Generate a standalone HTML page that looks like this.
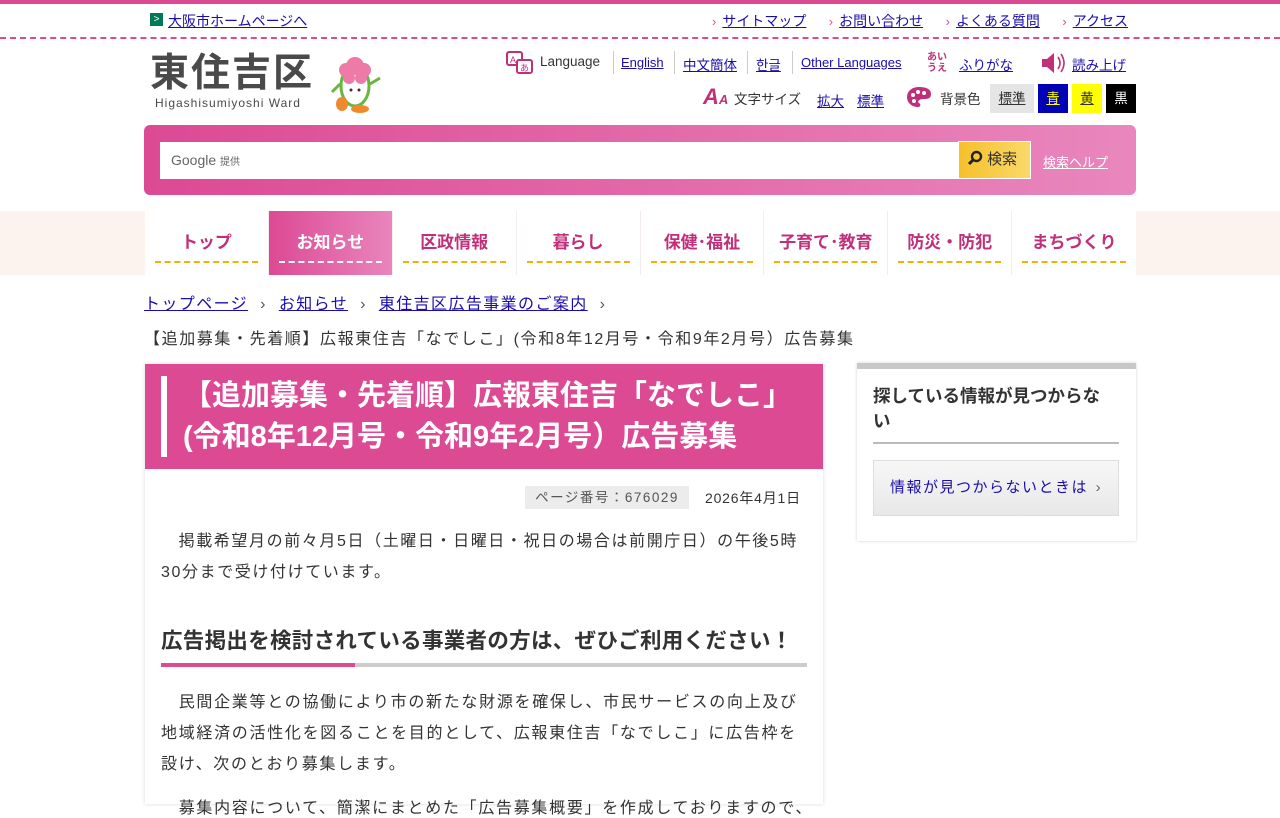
<!DOCTYPE html>
<html lang="ja"><head><meta charset="utf-8">
<style>
*{box-sizing:border-box;margin:0;padding:0}
body{width:1280px;height:800px;overflow:hidden;background:#fff;font-family:"Liberation Sans","Noto Sans CJK JP",sans-serif;color:#333;position:relative}
a{color:#1a0dab;text-decoration:underline}
.abs{position:absolute}
.topbar{position:absolute;left:0;top:0;width:1280px;height:4px;background:#dc4a94}
.dash{position:absolute;left:0;top:37px;width:1280px;border-top:2px dashed #dc4a94}
.sm{font-size:14px}
.tl a{font-size:14px;color:#1a0dab}
.chev{color:#dc4a94;font-size:13px;margin-right:6px}
.nav{position:absolute;left:0;top:211px;width:1280px;height:64px;background:#fdf3ee}
.navin{position:absolute;left:145px;top:0;width:991px;height:64px;background:#fff;display:flex}
.ni{width:124px;height:64px;border-right:1px solid #f4ecec;position:relative;text-align:center;color:#c0307a;font-weight:bold;font-size:17px;padding-top:17px}
.ni:after{content:"";position:absolute;left:10px;right:10px;top:50px;border-top:2px dashed #efb300}
.ni.on{background:linear-gradient(90deg,#dc4a94,#e985bd);color:#fff}
.ni.on:after{border-top-color:#fff}
</style></head><body>
<div class="topbar"></div>
<div class="abs" style="left:150px;top:13px;width:13px;height:13px;background:#007a55;color:#fff;font-size:10px;line-height:13px;text-align:center">&gt;</div>
<a class="abs sm" style="left:168px;top:11px">大阪市ホームページへ</a>
<div class="abs tl" style="left:712px;top:11px;white-space:nowrap">
<span class="chev">›</span><a>サイトマップ</a>
<span class="chev" style="margin-left:18px">›</span><a>お問い合わせ</a>
<span class="chev" style="margin-left:18px">›</span><a>よくある質問</a>
<span class="chev" style="margin-left:18px">›</span><a>アクセス</a></div>
<div class="dash"></div>
<div class="abs" style="left:150px;top:52px;font-size:39px;font-weight:bold;color:#4a4a4a;letter-spacing:2px;line-height:44px">東住吉区</div>
<div class="abs" style="left:155px;top:96px;font-size:12px;color:#4a4a4a;letter-spacing:1px">Higashisumiyoshi Ward</div>
<svg class="abs" style="left:328px;top:54px" width="56" height="60" viewBox="0 0 56 60">
<path d="M12 30 L4 38M42 30 L52 24" stroke="#6ab53f" stroke-width="3"/>
<ellipse cx="27" cy="32" rx="14" ry="20" fill="#fff" stroke="#6ab53f" stroke-width="3"/>
<circle cx="27" cy="12" r="9" fill="#ee7aa8"/><circle cx="18" cy="16" r="7" fill="#ee7aa8"/><circle cx="36" cy="16" r="7" fill="#ee7aa8"/><circle cx="21" cy="24" r="6" fill="#ee7aa8"/><circle cx="33" cy="24" r="6" fill="#ee7aa8"/>
<ellipse cx="14" cy="50" rx="6" ry="7" fill="#ef8a2c"/><ellipse cx="32" cy="55" rx="9" ry="4" fill="#ef8a2c"/>
<circle cx="23" cy="36" r="1.5" fill="#333"/><circle cx="31" cy="36" r="1.5" fill="#333"/></svg>
<svg class="abs" style="left:506px;top:51px" width="28" height="26" viewBox="0 0 28 26"><rect x="1" y="1" width="15" height="13" rx="2" fill="none" stroke="#c0307a" stroke-width="2"/><rect x="11" y="9" width="15" height="13" rx="2" fill="#fff" stroke="#c0307a" stroke-width="2"/><text x="4" y="12" font-size="9" fill="#c0307a">A</text><text x="14" y="20" font-size="9" fill="#c0307a">あ</text></svg>
<div class="abs sm" style="left:540px;top:54px;color:#333;font-size:13.5px">Language</div>
<div class="abs" style="left:613px;top:51px;width:1px;height:23px;background:#ccc"></div>
<a class="abs" style="left:621px;top:55px;font-size:13px">English</a>
<div class="abs" style="left:674px;top:51px;width:1px;height:23px;background:#ccc"></div>
<a class="abs" style="left:683px;top:54px;font-size:13.5px">中文簡体</a>
<div class="abs" style="left:747px;top:51px;width:1px;height:23px;background:#ccc"></div>
<a class="abs" style="left:756px;top:54px;font-size:13.5px">한글</a>
<div class="abs" style="left:792px;top:51px;width:1px;height:23px;background:#ccc"></div>
<a class="abs" style="left:801px;top:55px;font-size:13px">Other Languages</a>
<div class="abs" style="left:927px;top:52px;font-size:10px;color:#c0307a;font-weight:bold;line-height:11px">あい<br>うえ</div>
<a class="abs" style="left:959px;top:54px;font-size:13.5px">ふりがな</a>
<svg class="abs" style="left:1040px;top:52px" width="26" height="22" viewBox="0 0 26 22"><path d="M2 7h5l7-6v20l-7-6H2z" fill="#c0307a"/><path d="M18 5q4 6 0 12M21 2q6 9 0 18" fill="none" stroke="#c0307a" stroke-width="1.6"/></svg>
<a class="abs" style="left:1072px;top:54px;font-size:13.5px">読み上げ</a>
<div class="abs" style="left:703px;top:84px;font-size:22px;font-weight:bold;color:#c0307a;font-style:italic">A<span style="font-size:13px">A</span></div>
<div class="abs" style="left:734px;top:88px;font-size:13.5px;color:#333">文字サイズ</div>
<a class="abs" style="left:817px;top:90px;font-size:13.5px">拡大</a>
<a class="abs" style="left:857px;top:90px;font-size:13.5px">標準</a>
<svg class="abs" style="left:906px;top:86px" width="26" height="22" viewBox="0 0 26 22"><path d="M13 1C5 1 1 6 1 11s4 10 11 10c3 0 3-3 1-4s0-4 4-4 8 0 8-5S20 1 13 1z" fill="#c0307a"/><circle cx="7" cy="9" r="2" fill="#fff"/><circle cx="12" cy="6" r="2" fill="#fff"/><circle cx="18" cy="7" r="2" fill="#fff"/><circle cx="8" cy="15" r="2" fill="#fff"/></svg>
<div class="abs" style="left:940px;top:88px;font-size:13.5px;color:#333">背景色</div>
<div class="abs" style="left:990px;top:84px;width:44px;height:29px;background:#e5e5e5;text-align:center;line-height:29px;font-size:13.5px"><u style="color:#333">標準</u></div>
<div class="abs" style="left:1038px;top:84px;width:30px;height:29px;background:#0000b4;text-align:center;line-height:29px;font-size:13.5px"><u style="color:#ff0">青</u></div>
<div class="abs" style="left:1072px;top:84px;width:30px;height:29px;background:#ff0;text-align:center;line-height:29px;font-size:13.5px"><u style="color:#333">黄</u></div>
<div class="abs" style="left:1106px;top:84px;width:30px;height:29px;background:#000;text-align:center;line-height:29px;font-size:13.5px;color:#fff">黒</div>
<div class="abs" style="left:144px;top:125px;width:992px;height:70px;border-radius:6px;background:linear-gradient(90deg,#dc4a94,#e987bd)"></div>
<div class="abs" style="left:160px;top:142px;width:798px;height:37px;background:#fff"></div>
<div class="abs" style="left:171px;top:152px;font-size:14px;color:#666">Google <span style="font-size:10px">提供</span></div>
<div class="abs" style="left:958px;top:141px;width:73px;height:38px;background:linear-gradient(90deg,#f5c12b,#fad86a);border:1px solid #fff;font-size:15px;color:#333;line-height:36px;padding-left:8px">
<svg width="16" height="16" viewBox="0 0 16 16" style="vertical-align:-2px"><circle cx="9.5" cy="6.5" r="4.5" fill="none" stroke="#222" stroke-width="2.4"/><path d="M6.5 9.5L2 14" stroke="#222" stroke-width="3"/></svg> 検索</div>
<a class="abs" style="left:1043px;top:152px;font-size:13px;color:#fff">検索ヘルプ</a>
<div class="nav"><div class="navin">
<div class="ni">トップ</div><div class="ni on">お知らせ</div><div class="ni">区政情報</div><div class="ni">暮らし</div><div class="ni">保健･福祉</div><div class="ni">子育て･教育</div><div class="ni">防災・防犯</div><div class="ni" style="border:none">まちづくり</div>
</div></div>
<div class="abs" style="left:144px;top:290px;font-size:16px;letter-spacing:1.4px;white-space:nowrap"><a>トップページ</a><span style="margin:0 12px;color:#555">›</span><a>お知らせ</a><span style="margin:0 12px;color:#555">›</span><a>東住吉区広告事業のご案内</a><span style="margin:0 12px;color:#555">›</span></div>
<div class="abs" style="left:144px;top:325px;font-size:16px;letter-spacing:1.6px;color:#333;white-space:nowrap">【追加募集・先着順】広報東住吉「なでしこ」(令和8年12月号・令和9年2月号）広告募集</div>
<div class="abs" style="left:145px;top:364px;width:678px;height:440px;background:#fff;box-shadow:0 0 4px rgba(0,0,0,.15)"></div>
<div class="abs" style="left:145px;top:364px;width:678px;height:105px;background:#dc4a94"></div>
<div class="abs" style="left:161px;top:376px;width:6px;height:81px;background:#fff"></div>
<div class="abs" style="left:183px;top:376px;font-size:29px;font-weight:bold;color:#fff;line-height:41px;white-space:nowrap">【追加募集・先着順】広報東住吉「なでしこ」<br>(令和8年12月号・令和9年2月号）広告募集</div>
<div class="abs" style="left:525px;top:486px;width:164px;height:23px;background:#ececec;font-size:13.5px;color:#555;line-height:23px;text-align:center;letter-spacing:1.5px">ページ番号：676029</div>
<div class="abs" style="left:705px;top:488px;font-size:14px;color:#333;letter-spacing:.8px">2026年4月1日</div>
<div class="abs" style="left:161px;top:526px;width:650px;font-size:16px;line-height:31px;letter-spacing:1.6px;color:#333">　掲載希望月の前々月5日（土曜日・日曜日・祝日の場合は前開庁日）の午後5時30分まで受け付けています。</div>
<div class="abs" style="left:161px;top:624px;font-size:21.5px;font-weight:bold;color:#333;white-space:nowrap;letter-spacing:.3px">広告掲出を検討されている事業者の方は、ぜひご利用ください！</div>
<div class="abs" style="left:161px;top:663px;width:646px;height:4px;background:#ccc"></div>
<div class="abs" style="left:161px;top:663px;width:194px;height:4px;background:#dc4a94"></div>
<div class="abs" style="left:161px;top:687px;width:646px;font-size:16px;line-height:31px;letter-spacing:1.7px;color:#333">　民間企業等との協働により市の新たな財源を確保し、市民サービスの向上及び地域経済の活性化を図ることを目的として、広報東住吉「なでしこ」に広告枠を設け、次のとおり募集します。</div>
<div class="abs" style="left:161px;top:794px;width:650px;font-size:16px;letter-spacing:1.7px;color:#333;white-space:nowrap">　募集内容について、簡潔にまとめた「広告募集概要」を作成しておりますので、</div>
<div class="abs" style="left:857px;top:363px;width:279px;height:178px;background:#fff;box-shadow:0 0 3px rgba(0,0,0,.18);border-top:6px solid #c8c8c8"></div>
<div class="abs" style="left:873px;top:384px;width:240px;font-size:17.5px;font-weight:bold;line-height:25px;color:#333">探している情報が見つからない</div>
<div class="abs" style="left:873px;top:442px;width:246px;height:2px;background:#bbb"></div>
<div class="abs" style="left:873px;top:460px;width:246px;height:56px;border:1px solid #ddd;background:linear-gradient(#f7f7f7,#e8e8e8);font-size:15px;color:#1a0dab;letter-spacing:1.5px;line-height:54px;padding-left:16px">情報が見つからないときは <span style="color:#666;margin-left:2px">›</span></div>
</body></html>
